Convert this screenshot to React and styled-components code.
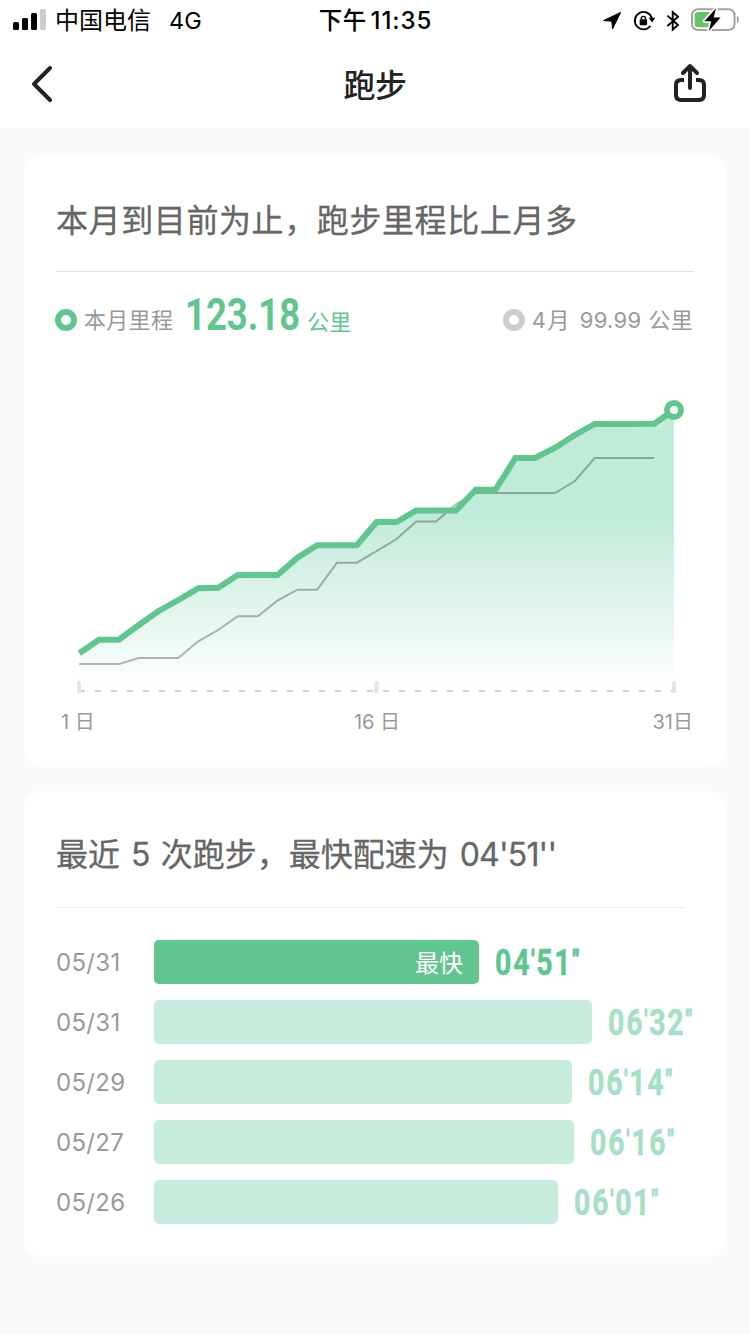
import styled, { createGlobalStyle } from 'styled-components';

const GREEN = '#61c590';

const GlobalStyle = createGlobalStyle`
    * {
        box-sizing: border-box;
    }

    body {
        margin: 0;
        background-color: #fafafa;
        font-family: Inter, "Noto Sans CJK SC", sans-serif;
    }
`;

const Page = styled.div`
    width: 750px;
    height: 1334px;
    overflow: hidden;
    background-color: #fafafa;
`;

const Header = styled.header`
    height: 128px;
    background-color: white;
`;

const StatusBar = styled.div`
    height: 40px;
    padding: 0 12px 0 13px;
    display: grid;
    grid-template-rows: 40px;
    grid-template-columns: 1fr auto 1fr;
    align-items: center;
    line-height: 38px;
    color: black;
`;

const Carrier = styled.div`
    padding-top: 2px;
    display: flex;
    align-items: center;
    font-size: 24px;
`;

const Network = styled.span`
    margin-left: 18px;
    font-size: 23.5px;
`;

const Clock = styled.div`
    padding-top: 2px;
    display: flex;
    gap: 4px;
    font-size: 23.5px;
    font-weight: 500;
    letter-spacing: 0.4px;

    span:last-child {
        font-size: 24px;
        letter-spacing: 0.9px;
    }
`;

const SignalIcon = styled.svg`
    margin: 0 9px 2px 0;
`;

const StatusIcons = styled.div`
    display: flex;
    align-items: center;
    justify-content: flex-end;
    height: 40px;
`;

const NavBar = styled.nav`
    height: 88px;
    padding: 0 42px 0 30px;
    display: flex;
    justify-content: space-between;
    align-items: center;
`;

const NavTitle = styled.h1`
    margin: 0;
    padding: 4px 0 0 24px;
    font-size: 32px;
    line-height: 44px;
    font-weight: 500;
    letter-spacing: -0.5px;
    color: #222;
`;

const Content = styled.main`
    padding: 27px 24px 0;
    display: flex;
    flex-direction: column;
    gap: 24px;
`;

const Card = styled.section`
    height: ${({ $height }) => $height}px;
    padding: 0 32px;
    border-radius: 18px;
    background-color: white;
`;

const CardTitle = styled.h2`
    margin: 0 ${({ $inset }) => $inset || 0}px 0 0;
    height: 117px;
    padding-top: ${({ $top }) => $top}px;
    border-bottom: 1px solid ${({ $line }) => $line || '#e2e2e2'};
    font-size: 32px;
    line-height: 104px;
    font-weight: 400;
    letter-spacing: ${({ $spacing }) => $spacing || 0}px;
    word-spacing: 2px;
    -webkit-text-stroke: 0.3px #666;
    color: #666;
    white-space: nowrap;
`;

const TitleNumber = styled.span`
    letter-spacing: -0.8px;
`;

const Legend = styled.div`
    height: 99px;
    padding-right: 1px;
    display: flex;
    justify-content: space-between;
    align-items: flex-start;
    font-size: 22px;
    line-height: 97px;
    color: #999;
    white-space: nowrap;
`;

const LegendItem = styled.div`
    display: flex;
    align-items: center;
    height: 97px;
`;

const Ring = styled.i`
    width: 22px;
    height: 22px;
    margin: 0 7px 2px ${({ $shift }) => $shift || 0}px;
    border: 6px solid ${({ $color }) => $color};
    border-radius: 50%;
`;

const Narrow = styled.span`
    display: inline-block;
    font-family: Roboto, sans-serif;
    font-weight: 700;
    transform: scaleX(${({ $scale }) => $scale});
    transform-origin: 0 50%;
`;

const Distance = styled(Narrow)`
    width: 122px;
    margin-left: 12px;
    padding-bottom: 12px;
    line-height: 85px;
    font-size: 45px;
    color: ${GREEN};
`;

const Unit = styled.span`
    padding-top: 4px;
    color: ${GREEN};
`;

const LegendText = styled.span`
    letter-spacing: 0.3px;
    margin-left: ${({ $gap }) => $gap || 0}px;
`;

const Chart = styled.svg`
    display: block;
    margin: 0 -8px;
`;

const AxisLabels = styled.div`
    padding: 12px 1px 0 5px;
    display: grid;
    grid-template-columns: 1fr auto 1fr;
    font-size: 20px;
    line-height: 31px;
    color: #999;

    span:last-child {
        text-align: right;
    }
`;

const RunList = styled.div`
    padding-top: 32px;
    display: flex;
    flex-direction: column;
    gap: 16px;
`;

const RunRow = styled.div`
    height: 44px;
    display: flex;
    align-items: center;

    > * {
        flex-shrink: 0;
    }
`;

const RunDate = styled.span`
    width: 98px;
    font-size: 24px;
    letter-spacing: 0.3px;
    color: #999;
`;

const Bar = styled.div`
    height: 44px;
    padding: 2px 16px 0 0;
    border-radius: 5px;
    background-color: ${({ $best }) => ($best ? GREEN : '#c6eddb')};
    font-size: 24px;
    line-height: 44px;
    text-align: right;
    color: white;
`;

const Pace = styled(Narrow)`
    margin-left: 16px;
    padding-top: 3px;
    font-size: 36px;
    line-height: 41px;
    letter-spacing: 2.3px;
    white-space: nowrap;
    -webkit-text-stroke: 0.5px currentColor;
    color: ${({ $best }) => ($best ? GREEN : '#a5dfc4')};
`;

const Mark = styled.span`
    font-size: 26px;
    line-height: 1;
    vertical-align: 7px;
    letter-spacing: 2px;
    -webkit-text-stroke: 1px currentColor;
`;

const thisMonth = [
    653.3, 639.7, 639.7, 625, 611, 600, 588.3, 587.7, 575, 575, 575, 557.7, 545.3, 545.3, 545.3, 522,
    522, 510.5, 510.5, 510.5, 489.7, 489.7, 458, 458, 447.7, 435, 424, 424, 424, 423.7, 410,
];

const lastMonth = [
    664, 664, 664, 658, 658, 658, 641.3, 630, 616.3, 616.3, 600.7, 589.7, 589.7, 562.7, 562.7, 551.2,
    539, 521.5, 521.5, 504.3, 493, 493, 493, 493, 493, 481, 458, 458, 458, 458,
];

const runs = [
    { date: '05/31', min: 4, sec: 51, best: true },
    { date: '05/31', min: 6, sec: 32 },
    { date: '05/29', min: 6, sec: 14 },
    { date: '05/27', min: 6, sec: 16 },
    { date: '05/26', min: 6, sec: 1 },
];

const toPoints = (values) => values.map((y, i) => `${(79.3 + i * 19.823).toFixed(1)},${y}`).join(' ');
const pad = (n) => String(n).padStart(2, '0');

function StatusRow() {
    return (
        <StatusBar>
            <Carrier>
                <SignalIcon width="33" height="22" viewBox="0 0 33 22">
                    <rect x="0" y="13" width="6" height="8" rx="1.5" />
                    <rect x="9" y="9" width="6" height="12" rx="1.5" />
                    <rect x="18" y="4" width="6" height="17" rx="1.5" />
                    <rect x="27" y="0" width="6" height="21" rx="1.5" fill="#ccc" />
                </SignalIcon>
                中国电信
                <Network>4G</Network>
            </Carrier>
            <Clock>
                <span>下午</span>
                <span>11:35</span>
            </Clock>
            <StatusIcons>
                <svg width="138" height="40" viewBox="602 0 138 40" style={{ marginRight: -2 }}>
                    <path d="M620.6 12.4 L603.6 20.6 L611.9 21.2 L612.5 29 Z" stroke="black" strokeWidth="1" strokeLinejoin="round" />
                    <path d="M650.4 26 A8.7 8.7 0 1 1 651.9 18.2" fill="none" stroke="black" strokeWidth="1.9" />
                    <path d="M648.7 17.8 H655.2 L652.1 22.6 Z" />
                    <rect x="639.7" y="19.2" width="7.4" height="6" rx="1" />
                    <path d="M641.2 19.5 V18.6 a2.2 2.2 0 0 1 4.4 0 V19.5" fill="none" stroke="black" strokeWidth="1.4" />
                    <path d="M667.4 15.6 L678 25 L672.7 29.6 V12.2 L678 16.8 L667.4 26" fill="none" stroke="black" strokeWidth="1.9" />
                    <rect x="692" y="9.2" width="42.6" height="20.8" rx="6" fill="white" stroke="#a3a3a3" strokeWidth="2" />
                    <path d="M736.8 15.6 Q739 17 739 19.5 T736.8 23.5 Z" fill="#a3a3a3" />
                    <path d="M698 12 H711 V27.3 H698 Q694.6 27.3 694.6 24 V15 Q694.6 12 698 12 Z" fill="#65c466" />
                    <path
                        d="M716 8.3 L704.4 21.2 H711.2 L708.8 31 L720.6 17.4 H713.7 Z"
                        stroke="white"
                        strokeWidth="3.5"
                        paintOrder="stroke"
                        strokeLinejoin="round"
                    />
                </svg>
            </StatusIcons>
        </StatusBar>
    );
}

function MonthChart() {
    const line = toPoints(thisMonth);

    return (
        <Chart width="654" height="324" viewBox="48 371 654 324">
            <defs>
                <linearGradient id="area" gradientUnits="userSpaceOnUse" x1="0" y1="517" x2="0" y2="688">
                    <stop offset="0" stopColor="#c1ebd9" />
                    <stop offset="1" stopColor="#c1ebd9" stopOpacity="0" />
                </linearGradient>
            </defs>
            <polygon points={`79.3,690 ${line} 674,690`} fill="url(#area)" />
            <polyline points={toPoints(lastMonth)} fill="none" stroke="#000" strokeOpacity="0.29" strokeWidth="2" />
            <polyline points={line} fill="none" stroke={GREEN} strokeWidth="6" />
            <circle cx="674" cy="410" r="7" fill="white" stroke={GREEN} strokeWidth="6" />
            <path d="M79 691 H674" stroke="#d2d2d2" strokeWidth="2" strokeDasharray="6 10" />
            {[79, 376.5, 674].map((x) => (
                <rect key={x} x={x - 2} y="681" width="4" height="12" rx="1.5" fill="#e4e4e4" />
            ))}
        </Chart>
    );
}

function App() {
    return (
        <Page>
            <GlobalStyle />
            <Header>
                <StatusRow />
                <NavBar>
                    <svg width="24" height="40" viewBox="30 64 24 40">
                        <path d="M50 68 L34 84 L50 100" fill="none" stroke="#222" strokeWidth="4" strokeLinecap="round" strokeLinejoin="round" />
                    </svg>
                    <NavTitle>跑步</NavTitle>
                    <svg width="36" height="44" viewBox="672 62 36 44">
                        <path
                            d="M684 80 H681 Q676 80 676 85 V95 Q676 100 681 100 H699 Q704 100 704 95 V85 Q704 80 699 80 H696"
                            fill="none"
                            stroke="#222"
                            strokeWidth="4"
                        />
                        <path
                            d="M690 88 V67 M683 73 L690 66 L697 73"
                            fill="none"
                            stroke="#222"
                            strokeWidth="4"
                            strokeLinecap="round"
                            strokeLinejoin="round"
                        />
                    </svg>
                </NavBar>
            </Header>
            <Content>
                <Card $height={612}>
                    <CardTitle $top={14} $spacing={0.6}>本月到目前为止，跑步里程比上月多</CardTitle>
                    <Legend>
                        <LegendItem>
                            <Ring $color={GREEN} $shift={-1} />
                            <LegendText>本月里程</LegendText>
                            <Distance $scale={0.81}>123.18</Distance>
                            <Unit>公里</Unit>
                        </LegendItem>
                        <LegendItem>
                            <Ring $color="#ccc" />
                            <LegendText>4</LegendText>
                            <LegendText $gap={1}>月</LegendText>
                            <LegendText $gap={10}>99.99</LegendText>
                            <LegendText $gap={7}>公里</LegendText>
                        </LegendItem>
                    </Legend>
                    <MonthChart />
                    <AxisLabels>
                        <span>1 日</span>
                        <span>16 日</span>
                        <span>31日</span>
                    </AxisLabels>
                </Card>
                <Card $height={466}>
                    <CardTitle $top={12} $inset={9} $line="#ededed">
                        最近 <TitleNumber>5</TitleNumber> 次跑步，最快配速为 <TitleNumber>04'51''</TitleNumber>
                    </CardTitle>
                    <RunList>
                        {runs.map(({ date, min, sec, best }, idx) => (
                            <RunRow key={idx}>
                                <RunDate>{date}</RunDate>
                                <Bar $best={best} style={{ width: Math.round((min * 60 + sec) * 1.118) }}>
                                    {best && '最快'}
                                </Bar>
                                <Pace $best={best} $scale={0.79}>
                                    {pad(min)}<Mark>'</Mark>{pad(sec)}<Mark>"</Mark>
                                </Pace>
                            </RunRow>
                        ))}
                    </RunList>
                </Card>
            </Content>
        </Page>
    );
}

export default App;
